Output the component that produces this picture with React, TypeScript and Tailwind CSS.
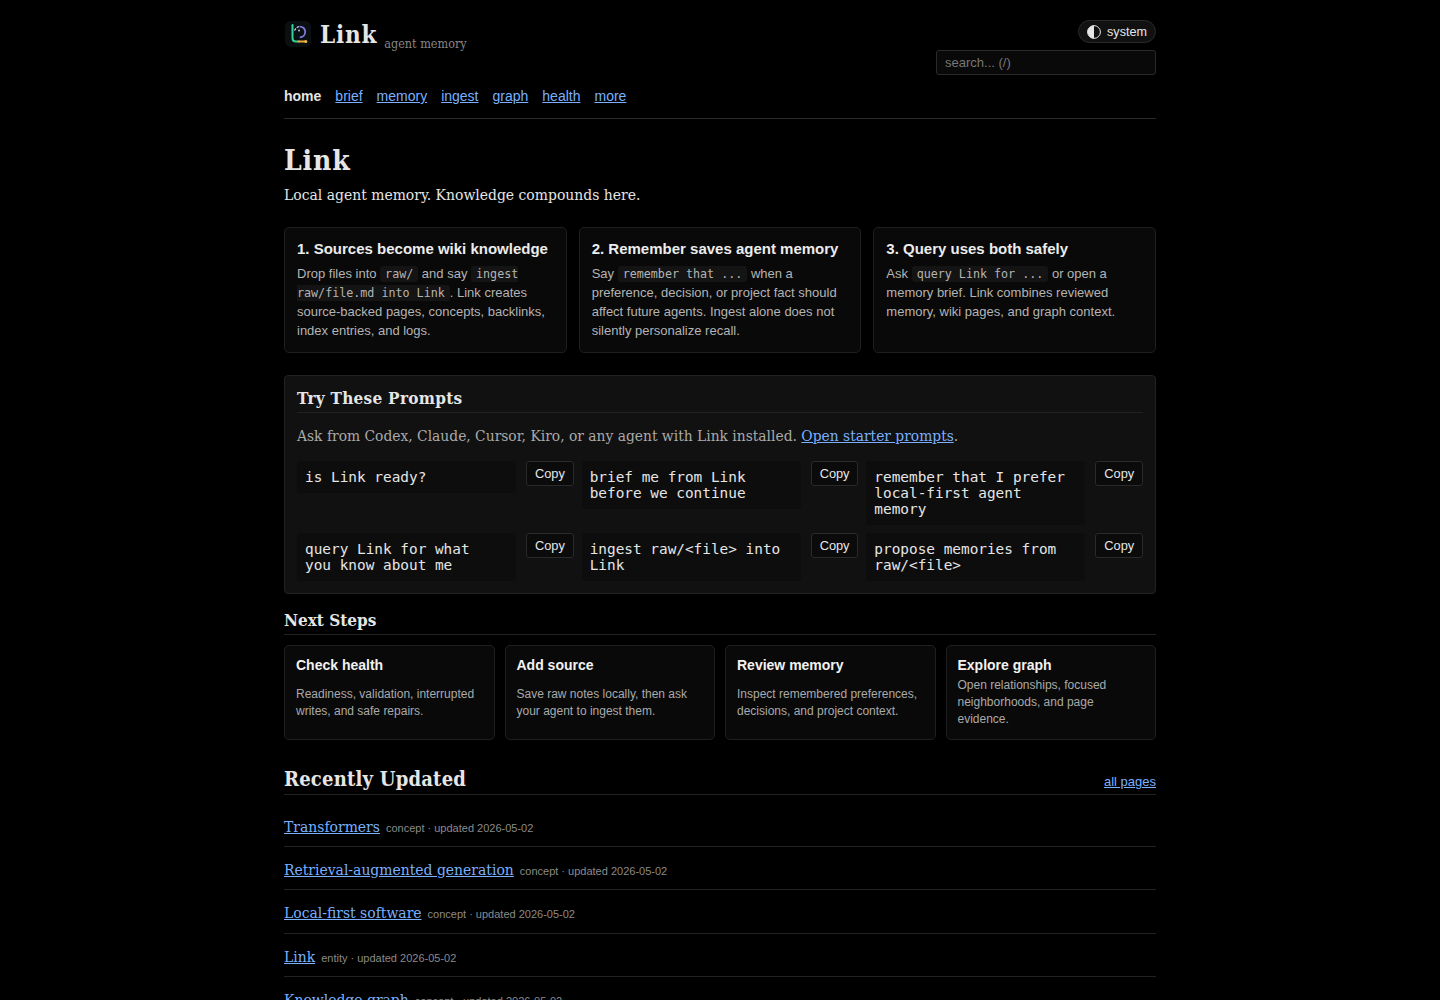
import type { ReactNode } from 'react';

const NAV = ['brief', 'memory', 'ingest', 'graph', 'health', 'more'];

const PROMPTS = [
  'is Link ready?',
  'brief me from Link before we continue',
  'remember that I prefer local-first agent memory',
  'query Link for what you know about me',
  'ingest raw/<file> into Link',
  'propose memories from raw/<file>',
];

const STEPS = [
  {
    title: 'Check health',
    text: 'Readiness, validation, interrupted writes, and safe repairs.',
  },
  {
    title: 'Add source',
    text: 'Save raw notes locally, then ask your agent to ingest them.',
  },
  {
    title: 'Review memory',
    text: 'Inspect remembered preferences, decisions, and project context.',
  },
  {
    title: 'Explore graph',
    text: 'Open relationships, focused neighborhoods, and page evidence.',
  },
];

const PAGES = [
  { name: 'Transformers', type: 'concept' },
  { name: 'Retrieval-augmented generation', type: 'concept' },
  { name: 'Local-first software', type: 'concept' },
  { name: 'Link', type: 'entity' },
  { name: 'Knowledge graph', type: 'concept' },
];

function Logo() {
  return (
    <svg viewBox="0 0 26 26" className="mt-px ml-px size-[26px] shrink-0" fill="none">
      <rect width="26" height="26" rx="6" fill="#0a1011" />
      <path
        d="M7.5 4v13c0 2.200 1.200 3.500 3.500 3.500h3"
        stroke="#35d399"
        strokeWidth="2"
        strokeLinecap="round"
      />
      <path d="M13.500 20.500H20" stroke="#e9a83a" strokeWidth="1.800" strokeLinecap="round" />
      <path
        d="M9.500 9.500c1-2 2.700-3.600 5-3.900"
        stroke="#b9c7f5"
        strokeWidth="1.300"
        strokeDasharray="2.500 1"
      />
      <path
        d="M14.500 5.600c3.400-.2 5.700 2.200 5.700 5.200s-2.200 5.500-5.400 5.500"
        stroke="#8275dc"
        strokeWidth="1.800"
      />
      <circle cx="14" cy="9.500" r="0.900" fill="#c9d3f8" />
      <circle cx="20.800" cy="20.500" r="1.500" fill="#f5b942" />
    </svg>
  );
}

function Code({ children }: { children: ReactNode }) {
  return (
    <code className="rounded-[3px] bg-[#141414] px-[5px] py-px font-['DejaVu_Sans_Mono',monospace] text-[11.7px] leading-none">
      {children}
    </code>
  );
}

function InfoCard({ title, children }: { title: string; children: ReactNode }) {
  return (
    <div className="rounded-[5px] border border-[#1f1f1f] bg-[#090909] px-3 pt-[11px] pb-3 font-['Liberation_Sans',sans-serif]">
      <h3 className="text-[15px] leading-5 font-bold whitespace-nowrap text-[#ececec]">
        {title}
      </h3>
      <p className="mt-[5px] text-[13px] leading-[19px] text-[#b4b4b4]">{children}</p>
    </div>
  );
}

function Prompt({ text }: { text: string }) {
  return (
    <div className="flex items-start gap-[10px]">
      <code className="min-w-0 flex-1 rounded-[3px] bg-[#0d0d0d] py-2 pr-3 pl-2 font-['DejaVu_Sans_Mono',monospace] text-[14.4px] leading-4 text-[#e6e6e6]">
        {text}
      </code>
      <button className="h-[25px] w-[47.5px] rounded-[3px] border border-[#2a2a2a] bg-[#0b0b0b] pt-px font-['Liberation_Sans',sans-serif] text-[12.8px] leading-none text-[#e6e6e6]">
        Copy
      </button>
    </div>
  );
}

export default function App() {
  return (
    <div className="h-[1000px] overflow-hidden bg-black font-['DejaVu_Serif_Condensed','DejaVu_Serif',serif] text-[15.5px] text-[#e6e6e6]">
      <div className="mx-auto w-[872px] pt-5">
        <header className="border-b border-[#2a2a2a] pb-3 font-['Liberation_Sans',sans-serif]">
          <div className="flex justify-between">
            <div className="flex items-start font-['DejaVu_Serif_Condensed','DejaVu_Serif',serif]">
              <Logo />
              <span className="mt-px ml-[9px] text-[24px] leading-7 font-bold tracking-[0.8px]">
                Link
              </span>
              <span className="mt-[14px] ml-[7px] text-[12.5px] leading-5 text-[#858585]">
                agent memory
              </span>
            </div>
            <div className="flex flex-col items-end gap-[7px]">
              <button className="flex h-[23px] w-[78px] items-center justify-center gap-[6px] rounded-full border border-[#2a2a2a] bg-[#111] text-[12.6px] leading-none">
                <svg viewBox="0 0 14 14" className="size-[14px]">
                  <circle cx="7" cy="7" r="6.400" fill="none" stroke="#e6e6e6" />
                  <path d="M7 .6a6.400 6.400 0 0 0 0 12.800z" fill="#e6e6e6" />
                </svg>
                <span className="pt-px">system</span>
              </button>
              <input
                type="text"
                placeholder="search... (/)"
                className="h-[25px] w-[220px] rounded-[3px] border border-[#2a2a2a] bg-[#090909] px-2 text-[13px] placeholder:text-[#777]"
              />
            </div>
          </div>
          <nav className="mt-[11px] flex gap-[14px] text-[14px] leading-5">
            <a className="font-bold">home</a>
            {NAV.map((item) => (
              <a key={item} className="text-[#7ab0ff] underline">
                {item}
              </a>
            ))}
          </nav>
        </header>

        <h1 className="mt-[23px] text-[28px] leading-[37px] font-bold tracking-[0.9px]">Link</h1>
        <p className="mt-[3px] leading-[26px]">Local agent memory. Knowledge compounds here.</p>

        <div className="mt-[19px] grid grid-cols-3 gap-3">
          <InfoCard title="1. Sources become wiki knowledge">
            Drop files into <Code>raw/</Code> and say <Code>ingest raw/file.md into Link</Code>.
            Link creates source-backed pages, concepts, backlinks, index entries, and logs.
          </InfoCard>
          <InfoCard title="2. Remember saves agent memory">
            Say <Code>remember that ...</Code> when a preference, decision, or project fact should
            affect future agents. Ingest alone does not silently personalize recall.
          </InfoCard>
          <InfoCard title="3. Query uses both safely">
            Ask <Code>query Link for ...</Code> or open a memory brief. Link combines reviewed
            memory, wiki pages, and graph context.
          </InfoCard>
        </div>

        <section className="mt-[22px] rounded-[4px] border border-[#222] bg-[#111] px-3 pt-[10px] pb-3">
          <h2 className="border-b border-[#222] pb-[2px] text-[17px] leading-6 font-bold tracking-[0.28px]">
            Try These Prompts
          </h2>
          <p className="mt-[10px] text-[15.4px] leading-[26px] text-[#aaa]">
            Ask from Codex, Claude, Cursor, Kiro, or any agent with Link installed.{' '}
            <a className="text-[#7ab0ff] underline">Open starter prompts</a>.
          </p>
          <div className="mt-3 grid grid-cols-3 gap-2">
            {PROMPTS.map((text) => (
              <Prompt key={text} text={text} />
            ))}
          </div>
        </section>

        <h2 className="mt-[14px] border-b border-[#222] pb-[2px] text-[17px] leading-6 font-bold">
          Next Steps
        </h2>
        <div className="mt-[10px] grid grid-cols-4 gap-[10px] font-['Liberation_Sans',sans-serif]">
          {STEPS.map(({ title, text }) => (
            <a
              key={title}
              className="flex h-[95px] flex-col rounded-[5px] border border-[#1f1f1f] bg-[#090909] px-[11px] pt-[9px] pb-[11px]"
            >
              <strong className="text-[14px] leading-5 text-[#f2f2f2]">{title}</strong>
              <span className="mt-[2px] flex flex-1 items-center text-[12px] leading-[16.8px] text-[#aaa]">
                {text}
              </span>
            </a>
          ))}
        </div>

        <div className="mt-[24px] flex items-end justify-between border-b border-[#222]">
          <h2 className="text-[20px] leading-[30px] font-bold tracking-[0.22px]">
            Recently Updated
          </h2>
          <a className="pb-[2px] font-['Liberation_Sans',sans-serif] text-[13px] leading-5 text-[#7ab0ff] underline">
            all pages
          </a>
        </div>
        <ul className="mt-[8.5px]">
          {PAGES.map(({ name, type }) => (
            <li
              key={name}
              className="flex items-baseline gap-[6px] border-b border-[#222] pt-[10px] pb-[6px] leading-[26.35px]"
            >
              <a className="text-[#7ab0ff] underline">{name}</a>
              <span className="font-['Liberation_Sans',sans-serif] text-[11px] leading-4 text-[#8a8a8a]">
                {type} · updated 2026-05-02
              </span>
            </li>
          ))}
        </ul>
      </div>
    </div>
  );
}
